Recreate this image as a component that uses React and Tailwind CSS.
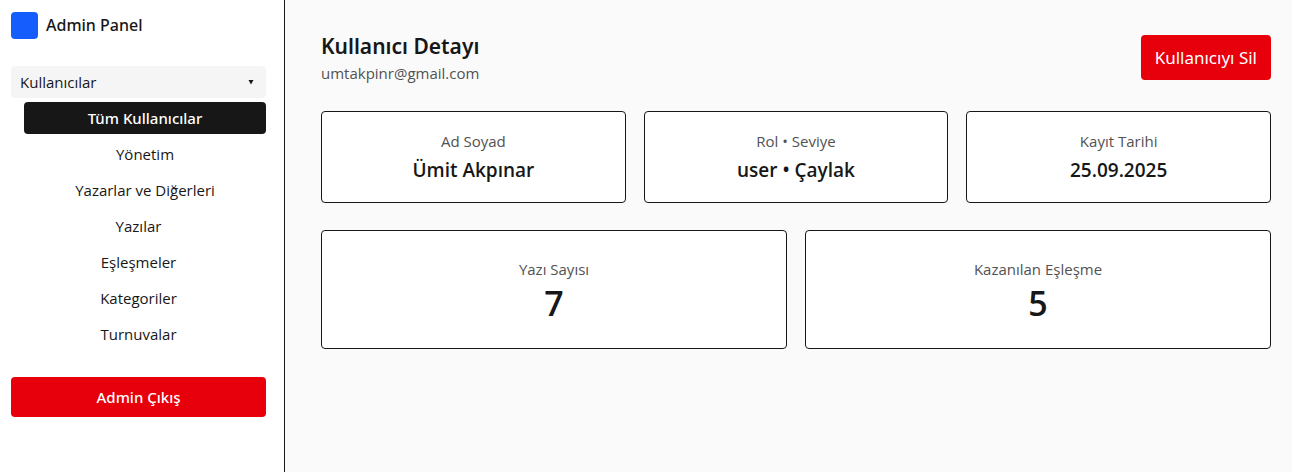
const subItems = ["Tüm Kullanıcılar", "Yönetim", "Yazarlar ve Diğerleri"];
const items = ["Yazılar", "Eşleşmeler", "Kategoriler", "Turnuvalar"];

const profile = [
  { label: "Ad Soyad", value: "Ümit Akpınar" },
  { label: "Rol • Seviye", value: "user • Çaylak" },
  { label: "Kayıt Tarihi", value: "25.09.2025" },
];

const stats = [
  { label: "Yazı Sayısı", value: 7 },
  { label: "Kazanılan Eşleşme", value: 5 },
];

function NavLink({ active, children }) {
  return (
    <a
      href="#"
      aria-current={active ? "page" : undefined}
      className={
        active
          ? "block rounded bg-neutral-900 text-center font-['Noto_Sans',sans-serif] font-medium leading-8 text-white"
          : "block rounded text-center leading-8"
      }
    >
      {children}
    </a>
  );
}

function Sidebar() {
  return (
    <aside className="w-[285px] shrink-0 border-r border-neutral-900 bg-white pt-3 pr-[18px] pl-[11px] text-[15px]">
      <div className="flex items-center gap-2">
        <span className="size-[27px] rounded bg-[#155dfc]" />
        <span className="font-['Noto_Sans',sans-serif] text-[16px] leading-[27px] font-medium">Admin Panel</span>
      </div>
      <nav className="mt-[27px] flex flex-col gap-1">
        <button
          type="button"
          aria-expanded="true"
          className="flex items-center justify-between rounded bg-neutral-100 pr-3 pl-[9px] leading-8"
        >
          <span>Kullanıcılar</span>
          <svg className="size-[6px]" viewBox="0 0 6 6" fill="currentColor" aria-hidden="true">
            <path d="M0.5 1h5L3 5.5z" />
          </svg>
        </button>
        <div className="flex flex-col gap-1 pl-[13px]">
          {subItems.map((name, i) => (
            <NavLink key={name} active={i === 0}>
              {name}
            </NavLink>
          ))}
        </div>
        {items.map((name) => (
          <NavLink key={name}>{name}</NavLink>
        ))}
      </nav>
      <button
        type="button"
        className="mt-[27px] w-full rounded bg-[#e7000b] text-center font-['Noto_Sans',sans-serif] leading-10 font-medium text-white"
      >
        Admin Çıkış
      </button>
    </aside>
  );
}

export default function App() {
  return (
    <div className="flex min-h-screen bg-neutral-50 font-['Open_Sans','Noto_Sans',sans-serif] text-neutral-900">
      <Sidebar />
      <main className="min-w-0 flex-1 pt-[30px] pr-[21px] pb-9 pl-9">
        <header className="flex items-center justify-between">
          <div>
            <h1 className="font-['Noto_Sans',sans-serif] text-[21px] leading-8 font-semibold">Kullanıcı Detayı</h1>
            <p className="text-[15px] leading-[22px] text-neutral-600">umtakpinr@gmail.com</p>
          </div>
          <button
            type="button"
            className="rounded bg-[#e7000b] px-[14px] py-[9px] font-['Noto_Sans',sans-serif] text-[17px] leading-[27px] text-white"
          >
            Kullanıcıyı Sil
          </button>
        </header>

        <section className="mt-[27px] grid grid-cols-3 gap-[18px]">
          {profile.map(({ label, value }) => (
            <div key={label} className="rounded border border-neutral-900 bg-white p-[18px] text-center">
              <div className="text-[15px] leading-[22px] text-neutral-600">{label}</div>
              <div className="mt-[5px] text-[19px] leading-[27px] font-semibold">{value}</div>
            </div>
          ))}
        </section>

        <section className="mt-[27px] grid grid-cols-2 gap-[18px]">
          {stats.map(({ label, value }) => (
            <div key={label} className="rounded border border-neutral-900 bg-white p-[27px] text-center">
              <div className="text-[15px] leading-[22px] text-neutral-600">{label}</div>
              <div className="mt-[5px] text-[34px] leading-9 font-semibold">{value}</div>
            </div>
          ))}
        </section>
      </main>
    </div>
  );
}
